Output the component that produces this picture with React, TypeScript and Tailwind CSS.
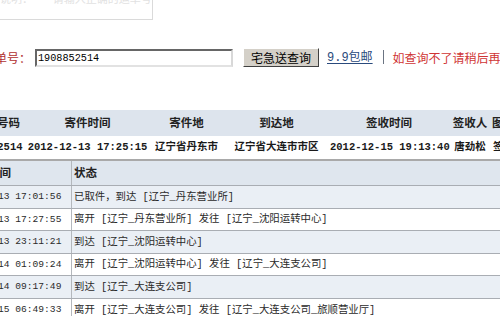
const heads = [
  { label: '运单号码', w: 'w-[68px]', pad: 'pl-[12px] text-center' },
  { label: '寄件时间', w: 'w-[125px]', pad: 'text-center' },
  { label: '寄件地', w: 'w-[73px]', pad: 'text-center' },
  { label: '到达地', w: 'w-[107px]', pad: 'text-center' },
  { label: '签收时间', w: 'w-[118px]', pad: 'text-center' },
  { label: '签收人', w: 'w-[44px]', pad: 'text-center' },
  { label: '图片', w: 'w-[50px]', pad: 'text-left' },
]

const info = ['1908852514', '2012-12-13 17:25:15', '辽宁省丹东市', '辽宁省大连市市区', '2012-12-15 19:13:40', '唐劲松', '签收']

const steps = [
  ['2012-12-13 17:01:56', '已取件，到达 [辽宁_丹东营业所]'],
  ['2012-12-13 17:27:55', '离开 [辽宁_丹东营业所] 发往 [辽宁_沈阳运转中心]'],
  ['2012-12-13 23:11:21', '到达 [辽宁_沈阳运转中心]'],
  ['2012-12-14 01:09:24', '离开 [辽宁_沈阳运转中心] 发往 [辽宁_大连支公司]'],
  ['2012-12-14 09:17:49', '到达 [辽宁_大连支公司]'],
  ['2012-12-15 06:49:33', '离开 [辽宁_大连支公司] 发往 [辽宁_大连支公司_旅顺营业厅]'],
]

export default function App() {
  return (
    <div className="w-[500px] h-[316px] overflow-hidden bg-white font-['Liberation_Mono','Noto_Sans_CJK_SC',monospace] text-[#222]">
      {/* top notice box, mostly scrolled off */}
      <div className="w-[153px] h-[20px] border-r border-b border-[#dadada] overflow-hidden">
        <div className="-mt-[6px] text-[11px] leading-[12px] text-[#e2e2e2] whitespace-nowrap">
          说明：&nbsp;&nbsp;&nbsp;请输入正确的运单号码进行查询
        </div>
      </div>

      {/* search row */}
      <div className="mt-[28px] -ml-[17px] w-[560px] flex items-start h-[19px] whitespace-nowrap">
        <div className="shrink-0 w-[48px] h-[19px] flex items-center text-[12px] leading-none text-[#b03030] font-['Noto_Sans_CJK_SC',sans-serif]">
          运单号：
        </div>
        <input
          readOnly
          value="1908852514"
          className="shrink-0 ml-[4px] mt-[1px] w-[198px] h-[18px] border-2 border-t-[#666] border-l-[#666] border-r-[#d8d8d8] border-b-[#e2e2e2] bg-white px-[1px] text-[10.2px] leading-none text-black outline-none font-['Liberation_Mono',monospace]"
        />
        <div className="shrink-0 ml-[10px] w-[76px] h-[19px] flex items-center justify-center bg-[#d4d0c8] border border-t-white border-l-white border-r-[#404040] border-b-[#404040] text-[12px] leading-none text-black font-['Noto_Sans_CJK_SC',sans-serif]">
          宅急送查询
        </div>
        <div className="shrink-0 ml-[8px] h-[19px] flex items-center text-[12px] leading-none text-[#2a4a7c] underline underline-offset-2">
          9.9包邮
        </div>
        <div className="shrink-0 ml-[10px] mt-[2px] w-px h-[14px] bg-[#6b7482]" />
        <div className="shrink-0 ml-[9px] h-[19px] flex items-center text-[12px] leading-none text-[#cf3434] font-['Noto_Sans_CJK_SC',sans-serif]">
          如查询不了请稍后再试
        </div>
      </div>

      {/* summary table */}
      <div className="mt-[43px] -ml-[43px] w-[600px]">
        <div className="flex h-[26px] items-center bg-[#dde4ed] text-[11.5px] font-bold leading-none text-[#222] font-['Noto_Sans_CJK_SC',sans-serif]">
          {heads.map((h) => (
            <div key={h.label} className={`${h.w} ${h.pad} shrink-0 whitespace-nowrap`}>
              {h.label}
            </div>
          ))}
        </div>
        <div className="flex h-[25px] items-center bg-white border-b-2 border-[#a9a9a9] text-[10.5px] font-bold leading-none text-[#1a1a1a]">
          {info.map((v, i) => (
            <div
              key={i}
              className={`${heads[i].w} ${i === 6 ? 'text-left pl-px' : 'text-center'} shrink-0 whitespace-nowrap`}
            >
              {v}
            </div>
          ))}
        </div>
      </div>

      {/* tracking steps */}
      <div className="-ml-[52px] w-[600px]">
        <div className="flex h-[25px] bg-[#dfe6ee] border-b border-[#a9adb3] text-[11.5px] font-bold leading-none font-['Noto_Sans_CJK_SC',sans-serif]">
          <div className="w-[124px] shrink-0 border-r border-[#b4b8bd] pl-[40px] flex items-center">时间</div>
          <div className="pl-[2px] flex items-center">状态</div>
        </div>
        {steps.map(([t, s], i) => (
          <div
            key={t}
            className={`flex h-[22.6px] border-b border-[#a9adb3] leading-none text-[#2a2a2a] ${i % 2 === 0 ? 'bg-[#eaeff5]' : 'bg-white'}`}
          >
            <div className="w-[124px] shrink-0 border-r border-[#b4b8bd] pl-[4px] flex items-center text-[9.6px] whitespace-nowrap">
              {t}
            </div>
            <div className="pl-[2px] flex items-center text-[10.4px] whitespace-nowrap">{s}</div>
          </div>
        ))}
      </div>
    </div>
  )
}
